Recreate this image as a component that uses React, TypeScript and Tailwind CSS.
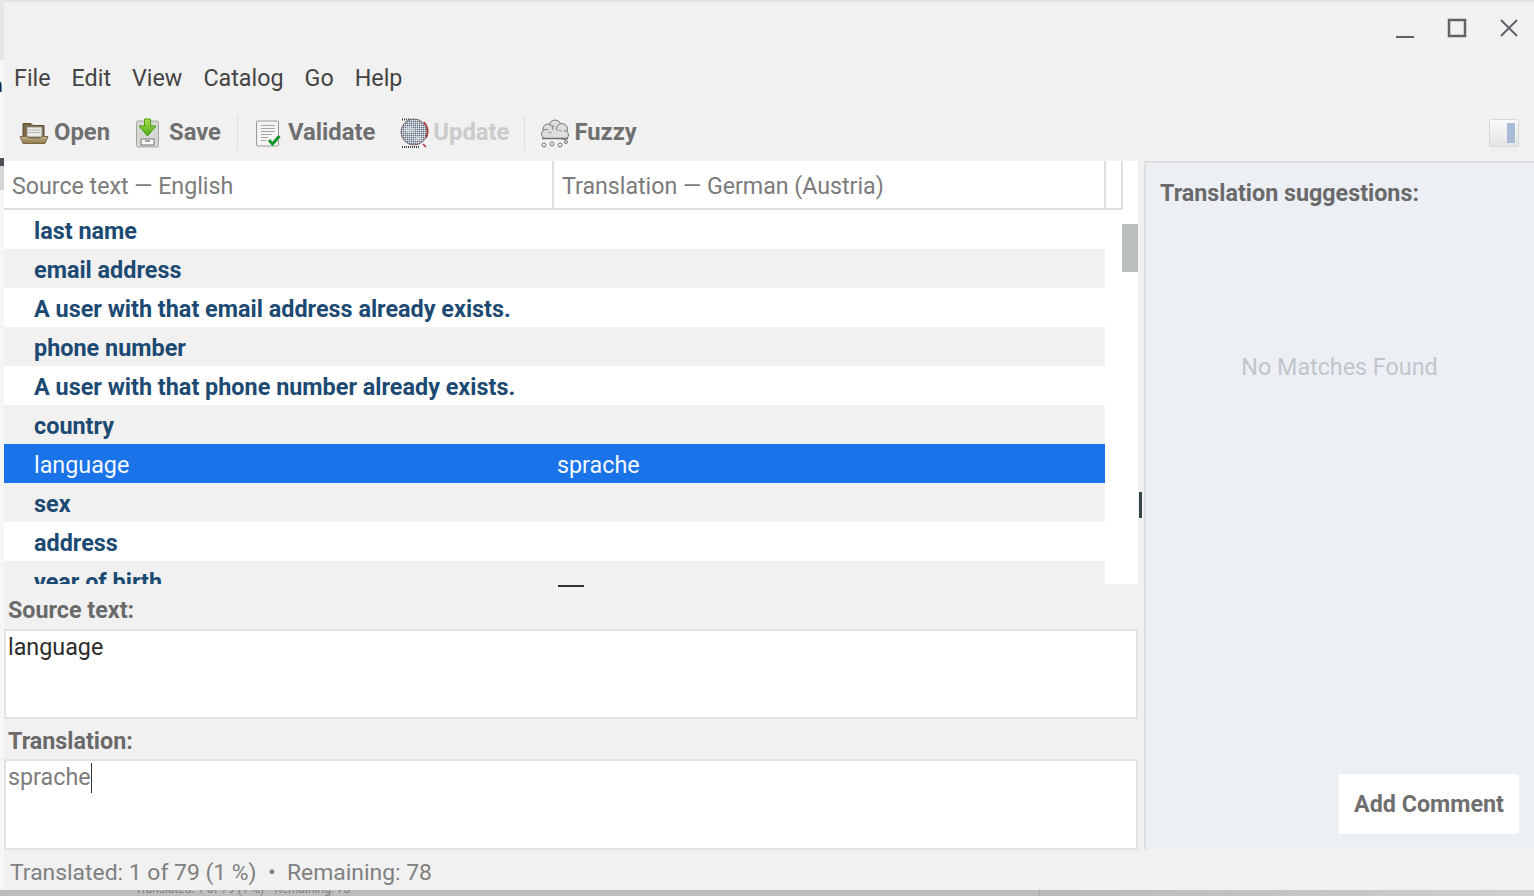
const rows = [
  { text: "last name" },
  { text: "email address" },
  { text: "A user with that email address already exists." },
  { text: "phone number" },
  { text: "A user with that phone number already exists." },
  { text: "country" },
  { text: "language", translation: "sprache", selected: true },
  { text: "sex" },
  { text: "address" },
  { text: "year of birth" },
];

function OpenIcon() {
  return (
    <svg width="30" height="28" viewBox="0 0 30 28">
      <defs>
        <linearGradient id="flap" x1="0" y1="0" x2="0" y2="1">
          <stop offset="0" stopColor="#c9b68e" />
          <stop offset="1" stopColor="#8d7649" />
        </linearGradient>
      </defs>
      <path d="M4 4.500h8l2 2h11v12H4z" fill="#7d6845" stroke="#5f4d32" />
      <rect x="8" y="8" width="15" height="10" fill="#ecece8" stroke="#8f8f88" />
      <path d="M9.500 11h12M9.500 13.500h12" stroke="#b5b5ae" />
      <path d="M1 17.500h7l1.500 1.500h12l1.500-1.500h6l-3 7H4z" fill="url(#flap)" stroke="#7c6844" />
    </svg>
  );
}

function SaveIcon() {
  return (
    <svg width="26" height="30" viewBox="0 0 26 30">
      <defs>
        <linearGradient id="arrow" x1="0" y1="0" x2="0" y2="1">
          <stop offset="0" stopColor="#a6e04a" />
          <stop offset="1" stopColor="#4fa81c" />
        </linearGradient>
      </defs>
      <rect x="1.500" y="3" width="22" height="26" rx="1.500" fill="#d6d7d3" stroke="#a5a6a2" />
      <rect x="6" y="21" width="13" height="6" fill="#f7f7f5" stroke="#777" />
      <path d="M10 23h5" stroke="#555" />
      <path d="M9.500 1h6v7h5.500l-8.500 10-8.500-10h5.500z" fill="url(#arrow)" stroke="#4d9a17" />
    </svg>
  );
}

function ValidateIcon() {
  return (
    <svg width="26" height="28" viewBox="0 0 26 28">
      <rect x="1.500" y="2" width="22" height="25" rx="1" fill="#f4f4f2" stroke="#9a9a98" />
      <path d="M6 6.500h14M6 9.500h14M6 12.500h14M6 15.500h11M6 18.500h7M6 21.500h5" stroke="#a8a8a6" />
      <path d="M14 21l3.500 4 7-8" fill="none" stroke="#12962a" strokeWidth="3" />
    </svg>
  );
}

function UpdateIcon() {
  return (
    <svg width="30" height="32" viewBox="0 0 30 32">
      <defs>
        <pattern id="dither" width="2" height="2" patternUnits="userSpaceOnUse">
          <rect width="2" height="2" fill="#aeb6c0" />
          <rect width="1" height="1" fill="#5f6d80" />
          <rect x="1" y="1" width="1" height="1" fill="#e2e5ea" />
        </pattern>
      </defs>
      <path d="M3 2.500h9" stroke="#444" strokeDasharray="1 1" strokeWidth="2" />
      <circle cx="15" cy="15" r="13" fill="url(#dither)" stroke="#7b6270" />
      <path d="M5 12c4-3 8-2 11 0-1 4-5 5-8 4zM16 21c3-2 6-1 7 0-1 2-4 3-7 2z" fill="#cfd4da" opacity="0.700" />
      <path d="M25 5a13 13 0 0 1 2 16M24 27l3 3" fill="none" stroke="#b03a3a" strokeWidth="1.500" />
      <path d="M3 30h17" stroke="#444" strokeDasharray="1 1" strokeWidth="2" />
    </svg>
  );
}

function FuzzyIcon() {
  return (
    <svg width="30" height="30" viewBox="0 0 30 30">
      <g fill="#dedede" stroke="#777">
        <circle cx="15" cy="8" r="6" />
        <circle cx="8" cy="11" r="5" />
        <circle cx="22" cy="11" r="5.500" />
        <circle cx="6" cy="16" r="4.500" />
        <circle cx="24" cy="17" r="4.500" />
        <rect x="6" y="12" width="18" height="8" stroke="none" />
      </g>
      <path d="M10 8c2-1 4-1 5 1M17 13c2-1 4-1 5 1M8 15c2-1 3-1 4 0" fill="none" stroke="#9a9a9a" />
      <path d="M2 20.500h26" stroke="#6e6e6e" strokeWidth="1.500" />
      <circle cx="4" cy="27" r="2" fill="#eee" stroke="#777" />
      <circle cx="12" cy="26" r="2" fill="#eee" stroke="#777" />
      <circle cx="20" cy="27" r="2" fill="#eee" stroke="#777" />
      <circle cx="26" cy="24" r="1.500" fill="#eee" stroke="#777" />
    </svg>
  );
}

function ToolButton({ icon, label, muted, gap }: { icon: React.ReactNode; label: string; muted?: boolean; gap: string }) {
  return (
    <div className={`flex items-center ${gap}`}>
      {icon}
      <span className={muted ? "text-[#cbcbcb]" : "text-[#707070]"}>{label}</span>
    </div>
  );
}

export default function App() {
  return (
    <div className="flex h-[896px] w-[1534px] flex-col overflow-hidden bg-[#b9b9b9] font-['Roboto',sans-serif] text-[23.3px]">
      <div className="flex h-[890px] bg-[#e4e4e4]">
        {/* sliver of the window behind */}
        <div className="w-[4px] shrink-0 overflow-hidden bg-[#f6f6f6] text-[20px] leading-[30px] text-[#222]">
          <div className="h-[60px] bg-[#e6e6e6]" />
          <div className="-ml-[8px] h-[50px] pt-[10px]">a</div>
          <div className="-ml-[7px] h-[48px] text-[16px]">1</div>
          <div className="h-[8px] bg-[#4a5056]" />
          <div className="h-[24px] bg-[#d5d5d5]" />
        </div>

        <div className="relative mt-[2px] flex min-w-0 flex-1 flex-col bg-[#f1f1f1]">
          {/* window controls */}
          <div className="flex h-[53px] items-center justify-end gap-[26px] pb-[2px] pr-[12px]">
            <svg width="26" height="26" viewBox="0 0 26 26">
              <path d="M4 22h18" stroke="#5f6368" strokeWidth="2" />
            </svg>
            <svg width="26" height="26" viewBox="0 0 26 26">
              <rect x="5" y="5" width="16" height="16" fill="none" stroke="#5f6368" strokeWidth="2.500" />
            </svg>
            <svg width="26" height="26" viewBox="0 0 26 26">
              <path d="M5 5l16 16M21 5L5 21" stroke="#5f6368" strokeWidth="2" />
            </svg>
          </div>

          <div className="flex h-[46px] items-center gap-[21px] pl-[10px] text-[#444]">
            <span>File</span>
            <span>Edit</span>
            <span>View</span>
            <span>Catalog</span>
            <span>Go</span>
            <span>Help</span>
          </div>

          <div className="flex h-[60px] items-center pl-[15px] pr-[15px] pt-[4px] text-[23.8px] font-bold">
            <ToolButton icon={<OpenIcon />} label="Open" gap="gap-[5px]" />
            <div className="ml-[25px]">
              <ToolButton icon={<SaveIcon />} label="Save" gap="gap-[8px]" />
            </div>
            <div className="ml-[16px] mr-[17px] h-[34px] w-px bg-[#dcdcdc]" />
            <ToolButton icon={<ValidateIcon />} label="Validate" gap="gap-[7px]" />
            <div className="ml-[24px]">
              <ToolButton icon={<UpdateIcon />} label="Update" muted gap="gap-[4px]" />
            </div>
            <div className="ml-[15px] mr-[15px] h-[34px] w-px bg-[#dcdcdc]" />
            <ToolButton icon={<FuzzyIcon />} label="Fuzzy" gap="gap-[4px]" />
            <div className="ml-auto flex h-[28px] w-[30px] justify-end rounded-[2px] border border-[#d8d8d8] bg-gradient-to-b from-[#fbfbfb] to-[#e4e4e4] p-[3px]">
              <div className="w-[8px] bg-[#a9bbd6]" />
            </div>
          </div>

          <div className="flex min-h-0 flex-1">
            {/* left column */}
            <div className="flex w-[1142px] border-r-2 border-[#e0e0e0]">
              <div className="flex w-[1134px] flex-col">
                <div className="relative h-[423px] bg-white">
                  <div className="flex h-[49px] w-[1119px] border-b-2 border-[#dedede] text-[23.2px] text-[#7b7b7b]">
                    <div className="w-[550px] border-r-2 border-[#dedede] pl-[8px] pt-[8px]">Source text — English</div>
                    <div className="w-[552px] border-r-2 border-[#dedede] pl-[8px] pt-[8px]">Translation — German (Austria)</div>
                    <div className="flex-1 border-r-2 border-[#dedede]" />
                  </div>
                  <div className="h-[374px] overflow-hidden">
                    {rows.map((row, i) => (
                      <div
                        key={row.text}
                        className={
                          row.selected
                            ? "flex h-[39px] w-[1101px] items-center bg-[#1a73e8] pt-[4px] text-[#f4f8ff]"
                            : i % 2 === 1
                              ? "flex h-[39px] w-[1101px] items-center bg-[#f1f1f1] pt-[4px] text-[23.4px] font-bold text-[#1c4a72]"
                              : "flex h-[39px] w-[1101px] items-center bg-white pt-[4px] text-[23.4px] font-bold text-[#1c4a72]"
                        }
                      >
                        <span className="w-[553px] pl-[30px]">{row.text}</span>
                        {row.translation && <span>{row.translation}</span>}
                      </div>
                    ))}
                  </div>
                  {/* scrollbar thumb */}
                  <div className="absolute left-[1118px] top-[63px] h-[48px] w-[16px] bg-[#bcbfbf]" />
                  <div className="absolute left-[554px] top-[424px] h-[2px] w-[26px] bg-[#333]" />
                </div>

                <div className="flex h-[45px] items-center pl-[4px] pt-[9px] font-bold text-[#6a6a6a]">Source text:</div>
                <div className="h-[91px] border-2 border-[#e3e3e3] bg-white pl-[2px] pt-0 leading-[32px] text-[#2c2c2c]">language</div>

                <div className="flex h-[40px] items-center pl-[4px] pt-[5px] font-bold text-[#6a6a6a]">Translation:</div>
                <div className="h-[91px] border-2 border-[#e3e3e3] bg-white pl-[2px] pt-0 leading-[32px] text-[#7d7d7d]">
                  <span className="border-r border-[#333] pb-[2px]">sprache</span>
                </div>
              </div>
            </div>

            {/* suggestions panel */}
            <div className="flex flex-1 flex-col border-t-2 border-[#e0e0e0] bg-[#ecf0f5] pl-[14px]">
              <div className="pt-[13px] font-bold text-[#6a6a6a]">Translation suggestions:</div>
              <div className="flex flex-1 items-start justify-center pr-[15px] pt-[139px] text-[#c2c6cb]">No Matches Found</div>
              <div className="mb-[16px] mr-[15px] flex h-[60px] w-[180px] items-center justify-center self-end rounded-[2px] bg-white font-bold text-[#6f6f6f]">
                Add Comment
              </div>
            </div>
          </div>

          <div className="flex h-[40px] shrink-0 items-center pl-[6px] pt-[7px] text-[22.9px] text-[#808080]">Translated: 1 of 79 (1 %) &nbsp;•&nbsp; Remaining: 78</div>

          {/* resize handle */}
          <div className="absolute left-[1135px] top-[490px] h-[26px] w-[3px] bg-[#36474c]" />
        </div>
      </div>

      {/* what shows under the window */}
      <div className="flex h-[6px] overflow-hidden bg-[#bdbdbd]">
        <div className="w-[1040px] shrink-0 border-r border-[#a9a9a9] pl-[135px]">
          <div className="-mt-[7px] text-[12px] leading-[12px] text-[#7f7f7f]">Translated: 1 of 79 (1 %) • Remaining: 78</div>
        </div>
        <div className="flex-1 bg-gradient-to-r from-[#b9b9b9] to-[#cfcfcf]" />
      </div>
    </div>
  );
}
